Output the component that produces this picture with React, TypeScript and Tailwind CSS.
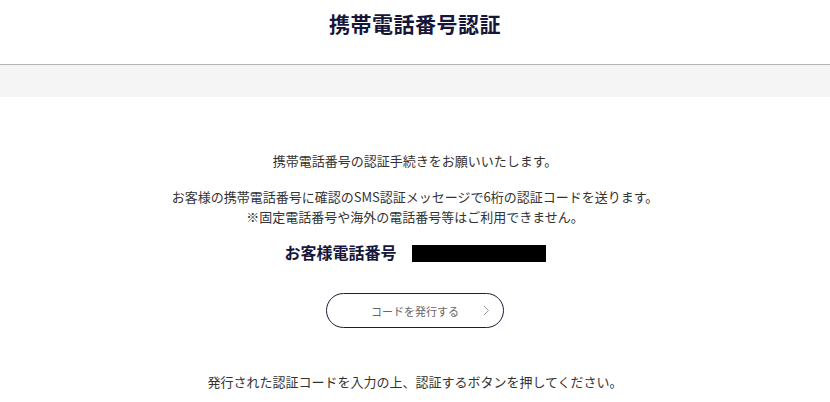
export default function App() {
  return (
    <div className="min-h-screen bg-white text-[#333] font-['Noto_Sans_CJK_JP','Noto_Sans',sans-serif]">
      <header className="h-[65px] border-b border-[#b5b5b5] flex items-center justify-center pb-[17px]">
        <h1 className="text-[21px] font-bold text-[#16163a] tracking-[0.5px]">携帯電話番号認証</h1>
      </header>
      <div className="h-8 bg-[#f5f5f5]" />
      <main className="flex flex-col items-center pt-[54px] text-[13px] leading-[20px]">
        <p>携帯電話番号の認証手続きをお願いいたします。</p>
        <div className="mt-[16px] text-center">
          <p>お客様の携帯電話番号に確認のSMS認証メッセージで6桁の認証コードを送ります。</p>
          <p>※固定電話番号や海外の電話番号等はご利用できません。</p>
        </div>
        <div className="mt-[15px] flex items-center gap-[15px]">
          <span className="text-[16px] font-bold text-[#16163a]">お客様電話番号</span>
          <span className="w-[134px] h-[17px] bg-black mt-[3px]" />
        </div>
        <button className="mt-[31px] w-[178px] h-[35px] rounded-full border border-[#1c1c3c] flex items-center justify-center relative text-[11px] text-[#666]">
          コードを発行する
          <svg className="absolute right-[13px]" width="7" height="11" viewBox="0 0 7 11" fill="none">
            <path d="M1 1l4.5 4.5L1 10" stroke="#999" strokeWidth="1" />
          </svg>
        </button>
        <p className="mt-[44px]">発行された認証コードを入力の上、認証するボタンを押してください。</p>
      </main>
    </div>
  );
}
